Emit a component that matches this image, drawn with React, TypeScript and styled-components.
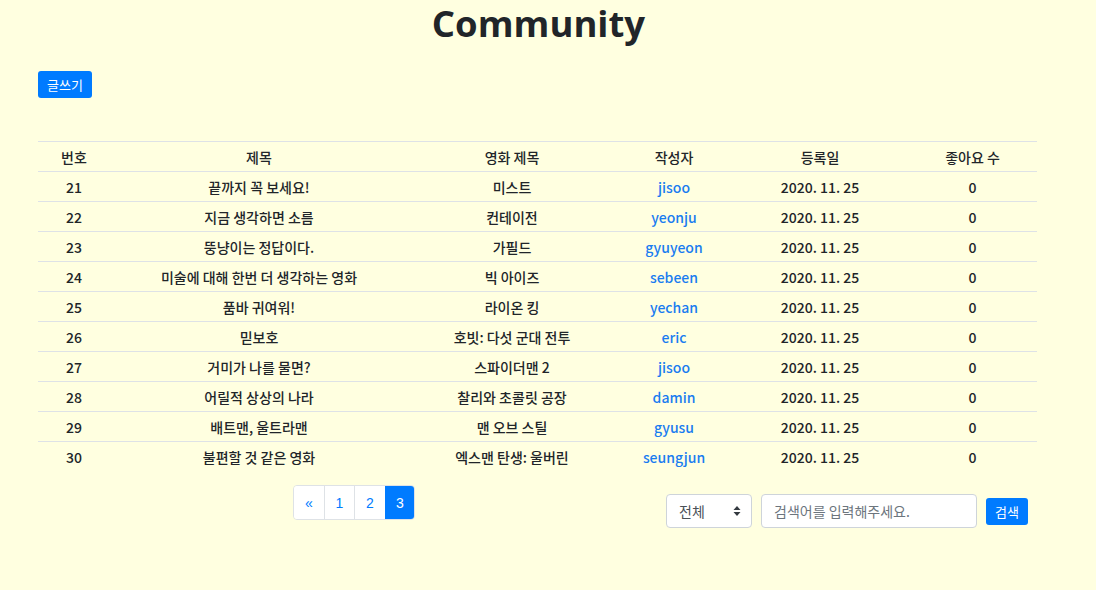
import React from "react";
import styled, { createGlobalStyle } from "styled-components";

const Global = createGlobalStyle`
  html, body { margin: 0; padding: 0; background: #ffffe0; }
  body {
    font-family: "Noto Sans", "Noto Sans CJK KR", sans-serif;
    color: #212529;
  }
`;

const Page = styled.div`
  width: 1096px;
  min-height: 590px;
  background: #ffffe0;
  box-sizing: border-box;
  padding: 0 59px 0 38px;
`;

const Title = styled.h1`
  margin: 0;
  padding: 0 0 0 2px;
  line-height: 46px;
  text-align: center;
  font-family: "Open Sans", sans-serif;
  font-weight: 700;
  font-size: 36.5px;
  color: #212529;
`;

const Toolbar = styled.div`
  display: flex;
  margin-top: 25px;
  height: 27px;
`;

const BlueButton = styled.button<{ $w: number; $h: number }>`
  width: ${(p) => p.$w}px;
  height: ${(p) => p.$h}px;
  background: #007bff;
  border: none;
  border-radius: 3px;
  color: #fff;
  font-family: "Noto Sans CJK KR", sans-serif;
  font-size: 13px;
  padding: 0;
  display: flex;
  align-items: center;
  justify-content: center;
`;

const Table = styled.table`
  margin-top: 43px;
  width: 999px;
  border-collapse: collapse;
  font-family: "Noto Sans CJK KR", sans-serif;
  font-size: 14px;
  font-weight: 500;
`;

const Th = styled.th<{ $w: number }>`
  width: ${(p) => p.$w}px;
  height: 29px;
  padding: 0;
  font-weight: 500;
  text-align: center;
  border-top: 1px solid #dee2e6;
  border-bottom: 1px solid #dee2e6;
`;

const Row = styled.tr<{ $last?: boolean }>`
  border-bottom: ${(p) => (p.$last ? "none" : "1px solid #dee2e6")};
`;

const Td = styled.td<{ $link?: boolean }>`
  height: 29px;
  padding: 0;
  text-align: center;
  color: ${(p) => (p.$link ? "#1a7cf0" : "#212529")};
`;

const Bottom = styled.div`
  display: flex;
  align-items: flex-start;
  margin-top: 14px;
`;

const Pager = styled.div`
  display: flex;
  margin-left: 255px;
  border: 1px solid #dee2e6;
  border-radius: 4px;
  overflow: hidden;
  height: 33px;
`;

const PageItem = styled.div<{ $active?: boolean; $w: number }>`
  width: ${(p) => p.$w}px;
  box-sizing: border-box;
  height: 33px;
  display: flex;
  align-items: center;
  justify-content: center;
  font-family: "Liberation Sans", sans-serif;
  font-size: 14px;
  background: ${(p) => (p.$active ? "#007bff" : "#fff")};
  color: ${(p) => (p.$active ? "#fff" : "#007bff")};
  border-left: 1px solid ${(p) => (p.$active ? "#007bff" : "#dee2e6")};
  &:first-child { border-left: none; }
`;

const Search = styled.div`
  display: flex;
  align-items: center;
  margin-left: 251px;
  margin-top: 9px;
  gap: 9px;
`;

const Select = styled.div`
  width: 86px;
  height: 34px;
  box-sizing: border-box;
  border: 1px solid #ced4da;
  border-radius: 4px;
  background: #fff;
  display: flex;
  align-items: center;
  justify-content: space-between;
  padding: 0 10px 0 12px;
  font-family: "Noto Sans CJK KR", sans-serif;
  font-size: 14px;
  color: #495057;
`;

const Input = styled.div`
  width: 216px;
  height: 34px;
  box-sizing: border-box;
  border: 1px solid #ced4da;
  border-radius: 4px;
  background: #fff;
  display: flex;
  align-items: center;
  padding-left: 12px;
  font-family: "Noto Sans CJK KR", sans-serif;
  font-size: 14px;
  color: #6c757d;
`;

const rows = [
  ["21", "끝까지 꼭 보세요!", "미스트", "jisoo"],
  ["22", "지금 생각하면 소름", "컨테이전", "yeonju"],
  ["23", "뚱냥이는 정답이다.", "가필드", "gyuyeon"],
  ["24", "미술에 대해 한번 더 생각하는 영화", "빅 아이즈", "sebeen"],
  ["25", "품바 귀여워!", "라이온 킹", "yechan"],
  ["26", "믿보호", "호빗: 다섯 군대 전투", "eric"],
  ["27", "거미가 나를 물면?", "스파이더맨 2", "jisoo"],
  ["28", "어릴적 상상의 나라", "찰리와 초콜릿 공장", "damin"],
  ["29", "배트맨, 울트라맨", "맨 오브 스틸", "gyusu"],
  ["30", "불편할 것 같은 영화", "엑스맨 탄생: 울버린", "seungjun"],
];

const cols: [string, number][] = [
  ["번호", 72],
  ["제목", 298],
  ["영화 제목", 208],
  ["작성자", 116],
  ["등록일", 176],
  ["좋아요 수", 129],
];

export default function App() {
  return (
    <Page>
      <Global />
      <Title>Community</Title>
      <Toolbar>
        <BlueButton $w={54} $h={27}>글쓰기</BlueButton>
      </Toolbar>
      <Table>
        <thead>
          <tr>
            {cols.map(([c, w]) => (
              <Th key={c} $w={w}>{c}</Th>
            ))}
          </tr>
        </thead>
        <tbody>
          {rows.map((r, i) => (
            <Row key={r[0]} $last={i === rows.length - 1}>
              <Td>{r[0]}</Td>
              <Td>{r[1]}</Td>
              <Td>{r[2]}</Td>
              <Td $link>{r[3]}</Td>
              <Td>2020. 11. 25</Td>
              <Td>0</Td>
            </Row>
          ))}
        </tbody>
      </Table>
      <Bottom>
        <Pager>
          <PageItem $w={30}>«</PageItem>
          <PageItem $w={30}>1</PageItem>
          <PageItem $w={31}>2</PageItem>
          <PageItem $w={29} $active>3</PageItem>
        </Pager>
        <Search>
          <Select>
            전체
            <svg width="8" height="12" viewBox="0 0 8 12">
              <path d="M4 1 L7.5 5 H0.5 Z M4 11 L7.5 7 H0.5 Z" fill="#343a40" />
            </svg>
          </Select>
          <Input>검색어를 입력해주세요.</Input>
          <BlueButton $w={42} $h={27}>검색</BlueButton>
        </Search>
      </Bottom>
    </Page>
  );
}
